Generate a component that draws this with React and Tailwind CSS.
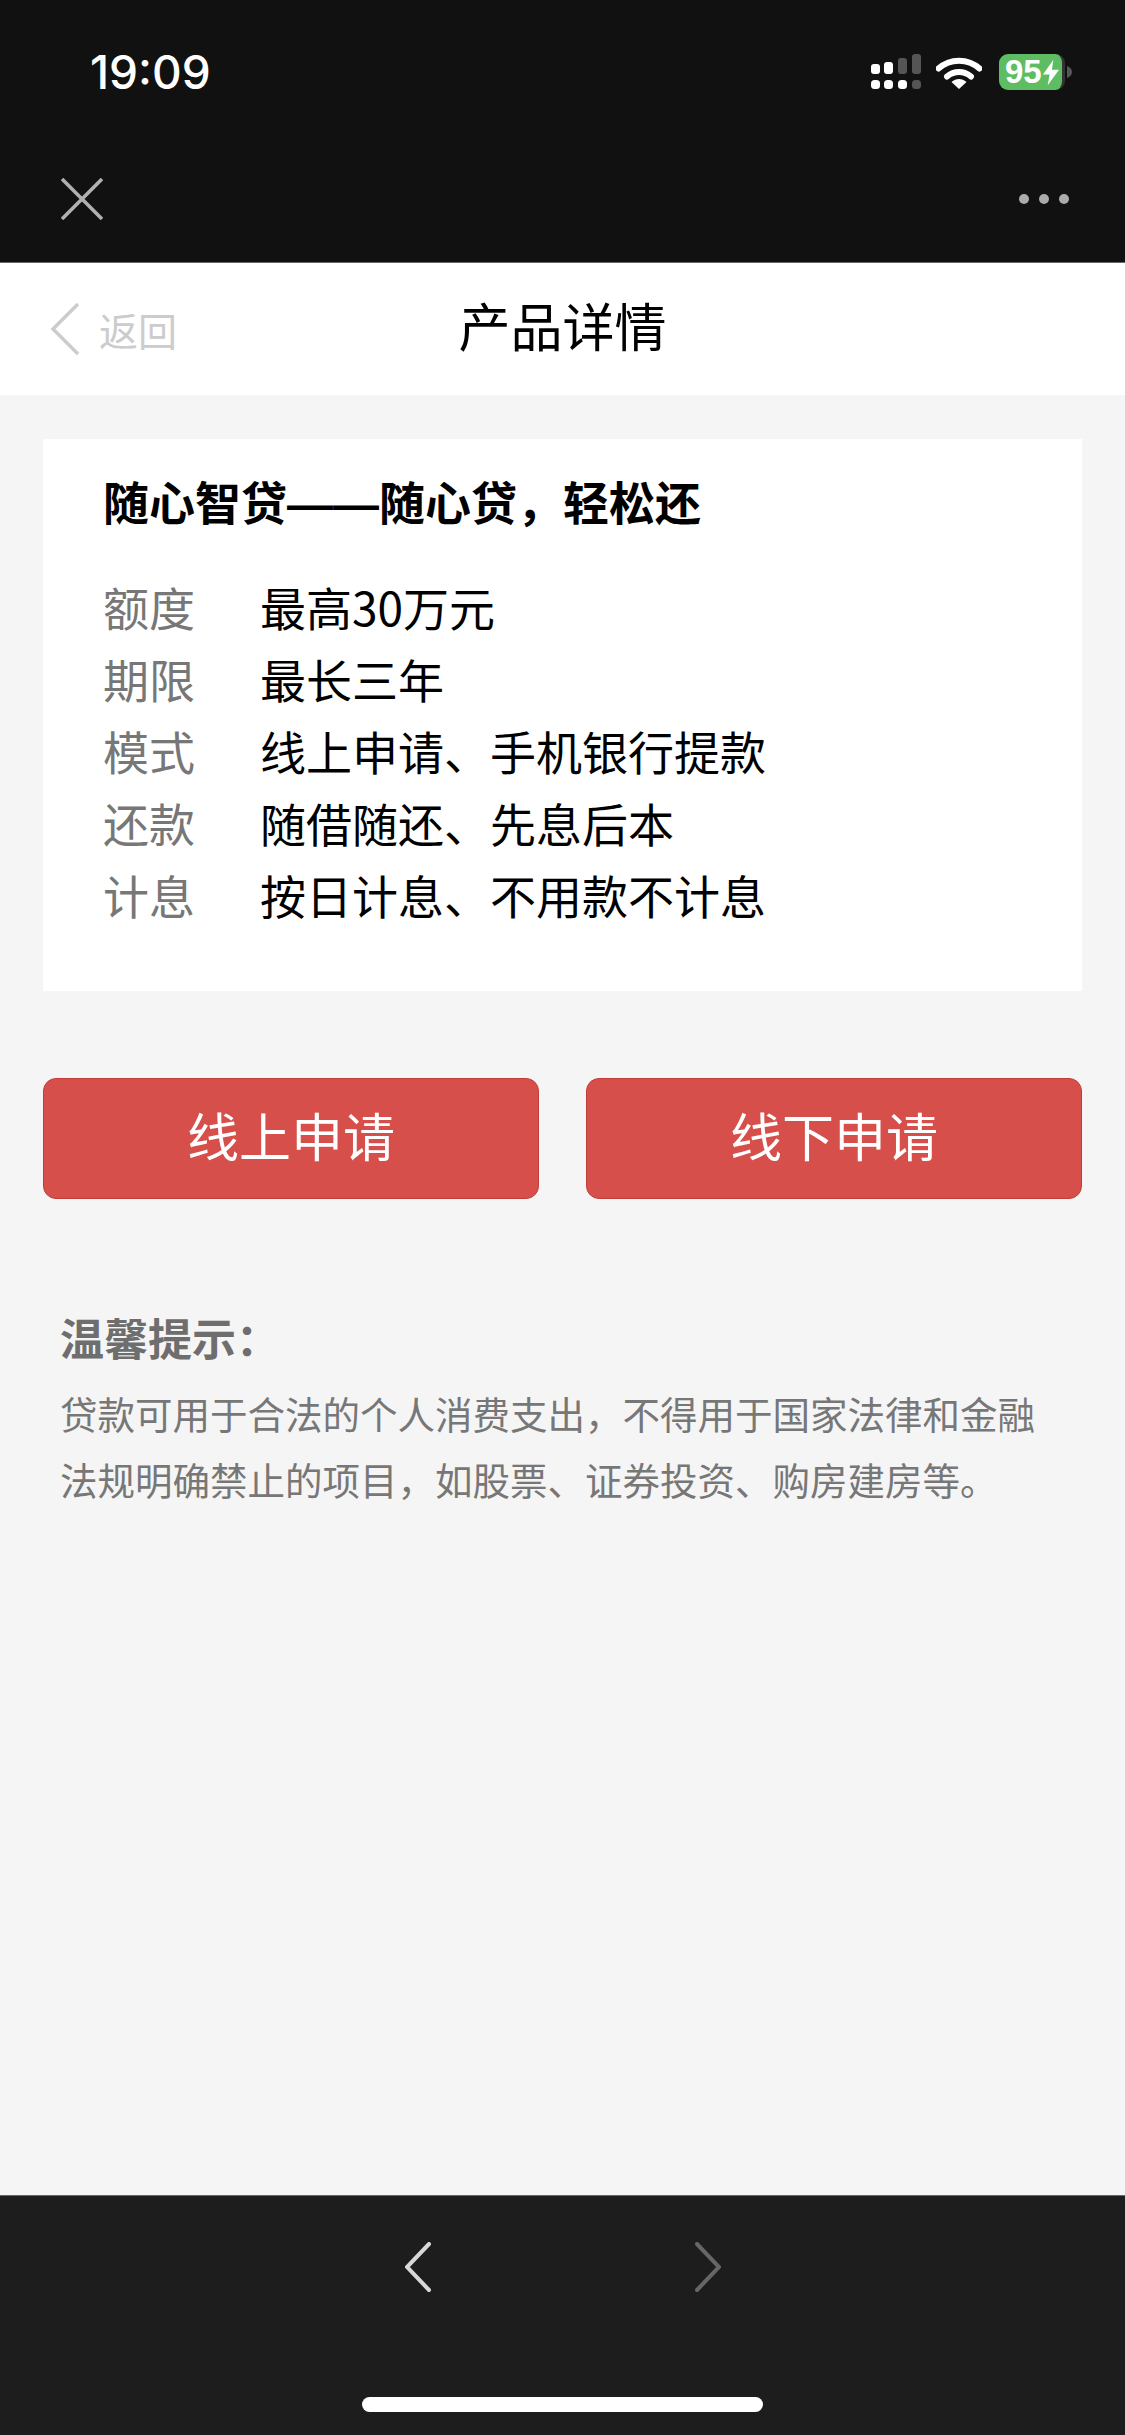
const cjk = { fontFamily: '"Noto Sans CJK SC", "Noto Sans", sans-serif' };

const rows = [
  ["额度", "最高30万元"],
  ["期限", "最长三年"],
  ["模式", "线上申请、手机银行提款"],
  ["还款", "随借随还、先息后本"],
  ["计息", "按日计息、不用款不计息"],
];

function Signal() {
  return (
    <svg width="50" height="36" viewBox="0 0 50 36" className="block">
      <g fill="#ffffff">
        <rect x="0" y="10" width="9" height="10" rx="3" />
        <rect x="13" y="8" width="9" height="12" rx="3" />
        <rect x="0" y="26" width="9" height="9" rx="3.5" />
        <rect x="13" y="26" width="9" height="9" rx="3.5" />
        <rect x="27" y="26" width="9" height="9" rx="3.5" />
      </g>
      <g fill="#555555">
        <rect x="27" y="4" width="9" height="16" rx="3" />
        <rect x="41" y="0" width="9" height="20" rx="3" />
        <rect x="41" y="26" width="9" height="9" rx="3.5" />
      </g>
    </svg>
  );
}

function Wifi() {
  return (
    <svg width="46" height="34" viewBox="0 0 46 34" className="block">
      <path d="M2.5 13.5C14 3 32 3 43.5 13.5" fill="none" stroke="#fff" strokeWidth="6" strokeLinecap="round" />
      <path d="M11 21.5C18 15.5 28 15.5 35 21.5" fill="none" stroke="#fff" strokeWidth="6" strokeLinecap="round" />
      <path d="M15.5 27C20 23 26 23 30.5 27L23 34Z" fill="#fff" />
    </svg>
  );
}

function Battery() {
  return (
    <div className="flex items-center gap-[2px]">
      <div className="flex h-[36px] w-[66px] items-center rounded-[9px] border-r-[3px] border-r-[#333333] bg-[#5ebd63] pl-[6px]">
        <span className="text-[33px] leading-[36px] font-bold text-white" style={{ fontFamily: '"Liberation Sans", sans-serif' }}>95</span>
        <svg width="16" height="27" viewBox="0 0 17 27" className="ml-[1px] shrink-0">
          <path d="M11 0L0 15.5H7L5 27L17 10.5H9.5Z" fill="#fff" />
        </svg>
      </div>
      <svg width="5" height="12" viewBox="0 0 5 12" className="block">
        <path d="M0 0C3 1 5 3 5 6C5 9 3 11 0 12Z" fill="#555555" />
      </svg>
    </div>
  );
}

function PageHeader() {
  return (
    <div className="flex h-[263px] flex-col border-b-[1px] border-b-[#666666] bg-[#111111]">
      <div className="flex h-[144px] items-center justify-between pr-[53px] pl-[90px]">
        <span className="text-[46px] leading-none font-medium text-white" style={{ fontFamily: "Inter, sans-serif" }}>19:09</span>
        <div className="flex items-center">
          <Signal />
          <div className="ml-[15px]"><Wifi /></div>
          <div className="ml-[17px]"><Battery /></div>
        </div>
      </div>
      <div className="mt-[28px] flex h-[54px] items-center justify-between pr-[56px] pl-[61px]">
        <svg width="42" height="42" viewBox="0 0 42 42" className="block">
          <path d="M1 1L41 41M41 1L1 41" stroke="#b0b0b0" strokeWidth="3.6" />
        </svg>
        <div className="flex gap-[10px]">
          <span className="h-[10px] w-[10px] rounded-full bg-[#ababab]" />
          <span className="h-[10px] w-[10px] rounded-full bg-[#ababab]" />
          <span className="h-[10px] w-[10px] rounded-full bg-[#ababab]" />
        </div>
      </div>
    </div>
  );
}

function NavBar() {
  return (
    <div className="relative flex h-[132px] items-center justify-center bg-white" style={cjk}>
      <div className="absolute top-0 left-[50px] flex h-full items-center">
        <svg width="30" height="54" viewBox="0 0 30 54" className="block">
          <path d="M28 2L3 27L28 52" fill="none" stroke="#cccccc" strokeWidth="3.4" />
        </svg>
        <span className="ml-[19px] text-[39px] leading-none text-[#cccccc]">返回</span>
      </div>
      <span className="mb-[9px] text-[52px] leading-none text-black">产品详情</span>
    </div>
  );
}

function ProductCard() {
  return (
    <div className="mx-[43px] mt-[44px] h-[552px] bg-white pt-[30px] pl-[60px]">
      <h1 className="text-[46px] leading-[62px] font-bold text-black">
        随心智贷<span className="font-['Liberation_Sans']">——</span>随心贷，轻松还
      </h1>
      <div className="mt-[35px]">
        {rows.map(([label, value]) => (
          <div key={label} className="flex h-[72px] items-center text-[46px]">
            <span className="w-[157px] shrink-0 text-[#777777]">{label}</span>
            <span className="text-black">{value}</span>
          </div>
        ))}
      </div>
    </div>
  );
}

function Buttons() {
  return (
    <div className="mx-[43px] mt-[87px] grid grid-cols-2 gap-[47px]">
      {["线上申请", "线下申请"].map((t) => (
        <button key={t} className="flex h-[121px] items-center justify-center rounded-[13px] border-[1px] border-[#c23c38] bg-[#d64f4a] pb-[8px] text-[52px] text-white">
          {t}
        </button>
      ))}
    </div>
  );
}

function Tips() {
  return (
    <div className="mt-[105px] pl-[60px]">
      <div className="text-[44px] leading-[66px] font-bold text-[#6e6e6e]">温馨提示：</div>
      <p className="mt-[10px] text-[37.5px] leading-[66px] text-[#777777]">
        贷款可用于合法的个人消费支出，不得用于国家法律和金融
        <br />
        法规明确禁止的项目，如股票、证券投资、购房建房等。
      </p>
    </div>
  );
}

function BottomBar() {
  return (
    <div className="flex h-[240px] flex-col items-center border-t-[1px] border-t-[#666666] bg-[#1d1d1d] pt-[46px]">
      <div className="flex w-[316px] justify-between">
        <svg width="26" height="50" viewBox="0 0 26 50" className="block">
          <path d="M24 2L2 25L24 48" fill="none" stroke="#d8d8d8" strokeWidth="4" strokeLinecap="round" />
        </svg>
        <svg width="26" height="50" viewBox="0 0 26 50" className="block">
          <path d="M2 2L24 25L2 48" fill="none" stroke="#666666" strokeWidth="4" strokeLinecap="round" />
        </svg>
      </div>
      <div className="mt-[105px] h-[15px] w-[401px] rounded-full bg-white" />
    </div>
  );
}

export default function App() {
  return (
    <div className="flex h-[2435px] w-[1125px] flex-col overflow-hidden bg-[#f5f5f5]" style={cjk}>
      <PageHeader />
      <NavBar />
      <div className="flex-1">
        <ProductCard />
        <Buttons />
        <Tips />
      </div>
      <BottomBar />
    </div>
  );
}
